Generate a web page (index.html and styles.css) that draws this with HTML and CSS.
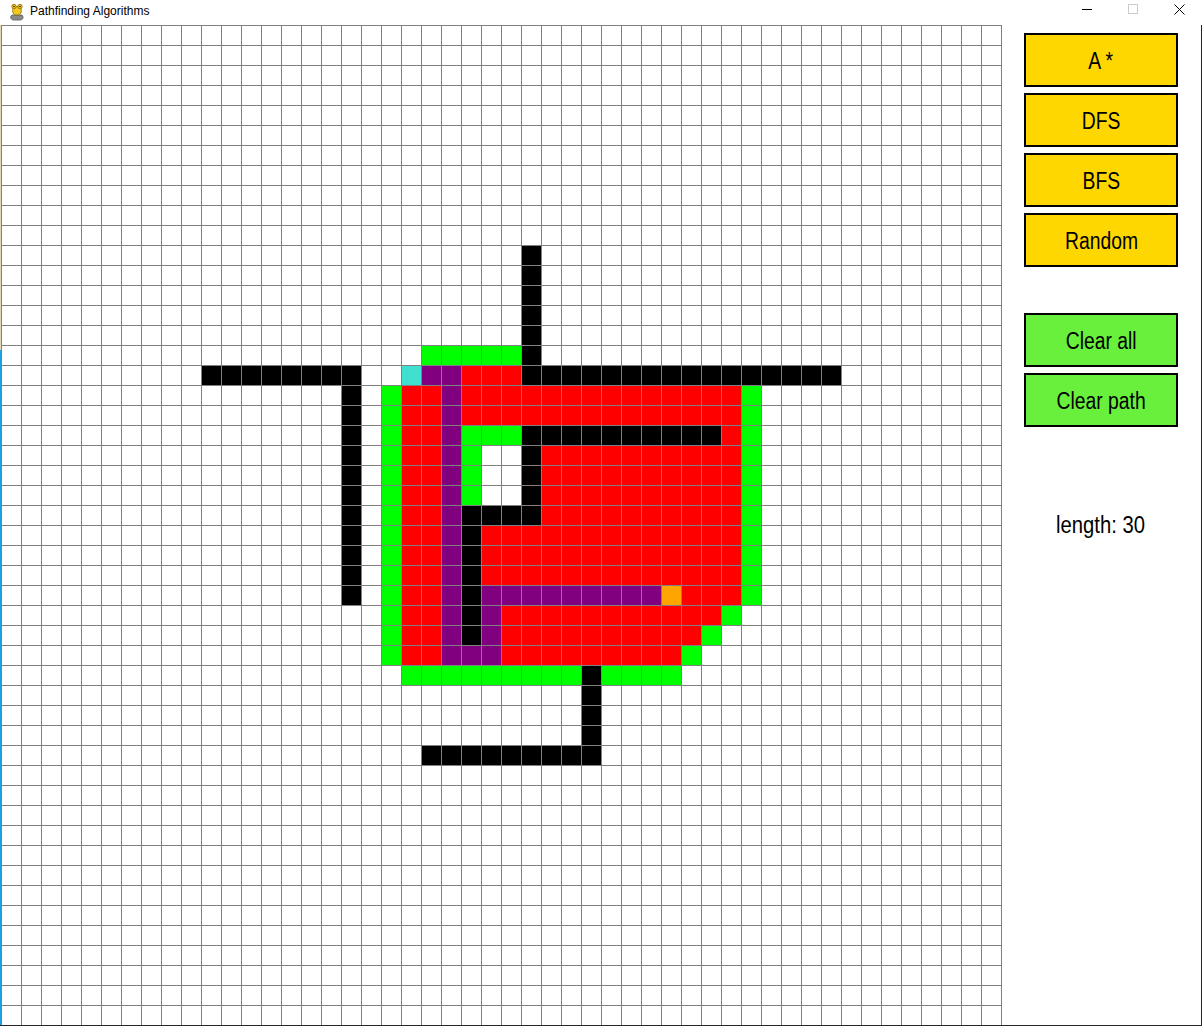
FILE: index.html
```html
<!DOCTYPE html>
<html>
<head>
<meta charset="utf-8">
<title>Pathfinding Algorithms</title>
<link rel="stylesheet" href="styles.css">
</head>
<body>
<div class="window">
  <div class="titlebar">
    <svg class="app-icon" width="16" height="18" viewBox="0 0 16 18">
      <path d="M3 12 C1 13 1 17 5 17 L11 17 C14 17 15 14 13 12 Z" fill="#8a8a8a" stroke="#555" stroke-width="0.8"/>
      <path d="M4 5 C3 9 4 12 8 12 C12 12 13 9 12 5 C11 3 5 3 4 5 Z" fill="#f2c81e" stroke="#8a6a00" stroke-width="0.8"/>
      <circle cx="5" cy="3.5" r="2.2" fill="#f2c81e" stroke="#8a6a00" stroke-width="0.8"/>
      <circle cx="11" cy="3.5" r="2.2" fill="#f2c81e" stroke="#8a6a00" stroke-width="0.8"/>
      <circle cx="5" cy="3.5" r="0.8" fill="#222"/>
      <circle cx="11" cy="3.5" r="0.8" fill="#222"/>
    </svg>
    <span class="title">Pathfinding Algorithms</span>
    <div class="controls">
      <div class="ctrl"><svg width="10" height="10" viewBox="0 0 10 10"><path d="M0 5.5 H10" stroke="#000" stroke-width="1"/></svg></div>
      <div class="ctrl"><svg width="10" height="10" viewBox="0 0 10 10"><rect x="0.5" y="0.5" width="9" height="9" fill="none" stroke="#cccccc" stroke-width="1"/></svg></div>
      <div class="ctrl"><svg width="11" height="11" viewBox="0 0 11 11"><path d="M0.5 0.5 L10.5 10.5 M10.5 0.5 L0.5 10.5" stroke="#000" stroke-width="1"/></svg></div>
    </div>
  </div>
  <div class="client">
    <div class="edge-left"></div>
    <div class="board">
      <div class="cell wall" style="grid-area: 12 / 27 / 18 / 28"></div>
      <div class="cell wall" style="grid-area: 18 / 11 / 19 / 19"></div>
      <div class="cell wall" style="grid-area: 19 / 18 / 30 / 19"></div>
      <div class="cell wall" style="grid-area: 18 / 27 / 19 / 43"></div>
      <div class="cell wall" style="grid-area: 21 / 27 / 22 / 37"></div>
      <div class="cell wall" style="grid-area: 22 / 27 / 25 / 28"></div>
      <div class="cell wall" style="grid-area: 25 / 24 / 26 / 28"></div>
      <div class="cell wall" style="grid-area: 26 / 24 / 32 / 25"></div>
      <div class="cell wall" style="grid-area: 33 / 30 / 37 / 31"></div>
      <div class="cell wall" style="grid-area: 37 / 22 / 38 / 31"></div>

      <div class="cell open" style="grid-area: 17 / 22 / 18 / 27"></div>
      <div class="cell open" style="grid-area: 19 / 20 / 33 / 21"></div>
      <div class="cell open" style="grid-area: 19 / 38 / 30 / 39"></div>
      <div class="cell open" style="grid-area: 21 / 24 / 22 / 27"></div>
      <div class="cell open" style="grid-area: 22 / 24 / 25 / 25"></div>
      <div class="cell open" style="grid-area: 30 / 37 / 31 / 38"></div>
      <div class="cell open" style="grid-area: 31 / 36 / 32 / 37"></div>
      <div class="cell open" style="grid-area: 32 / 35 / 33 / 36"></div>
      <div class="cell open" style="grid-area: 33 / 21 / 34 / 30"></div>
      <div class="cell open" style="grid-area: 33 / 31 / 34 / 35"></div>

      <div class="cell closed" style="grid-area: 18 / 24 / 19 / 27"></div>
      <div class="cell closed" style="grid-area: 19 / 21 / 33 / 23"></div>
      <div class="cell closed" style="grid-area: 19 / 24 / 21 / 38"></div>
      <div class="cell closed" style="grid-area: 21 / 37 / 22 / 38"></div>
      <div class="cell closed" style="grid-area: 22 / 28 / 29 / 38"></div>
      <div class="cell closed" style="grid-area: 26 / 25 / 29 / 28"></div>
      <div class="cell closed" style="grid-area: 29 / 35 / 30 / 38"></div>
      <div class="cell closed" style="grid-area: 30 / 26 / 31 / 37"></div>
      <div class="cell closed" style="grid-area: 31 / 26 / 32 / 36"></div>
      <div class="cell closed" style="grid-area: 32 / 26 / 33 / 35"></div>

      <div class="cell path" style="grid-area: 18 / 22 / 19 / 24"></div>
      <div class="cell path" style="grid-area: 19 / 23 / 33 / 24"></div>
      <div class="cell path" style="grid-area: 29 / 25 / 30 / 34"></div>
      <div class="cell path" style="grid-area: 30 / 25 / 33 / 26"></div>
      <div class="cell path" style="grid-area: 32 / 24 / 33 / 25"></div>

      <div class="cell end" style="grid-area: 18 / 21 / 19 / 22"></div>
      <div class="cell start" style="grid-area: 29 / 34 / 30 / 35"></div>
    </div>
    <div class="sidebar">
      <div class="btn-group">
        <div class="btn algo"><span class="label">A *</span></div>
        <div class="btn algo"><span class="label">DFS</span></div>
        <div class="btn algo"><span class="label">BFS</span></div>
        <div class="btn algo"><span class="label">Random</span></div>
      </div>
      <div class="btn-group actions">
        <div class="btn clear"><span class="label">Clear all</span></div>
        <div class="btn clear"><span class="label">Clear path</span></div>
      </div>
      <div class="length"><span class="label wide">length: 30</span></div>
    </div>
    <div class="edge-right"></div>
  </div>
  <div class="edge-bottom"></div>
</div>
</body>
</html>
```

FILE: styles.css
```css
* { box-sizing: border-box; }

html, body {
  margin: 0;
  padding: 0;
  background: #ffffff;
}

.window {
  width: 1202px;
  height: 1026px;
  display: flex;
  flex-direction: column;
  background: #ffffff;
  overflow: hidden;
}

.titlebar {
  height: 25px;
  display: flex;
  align-items: center;
  background: #ffffff;
  padding-left: 9px;
}

.app-icon {
  flex: none;
  margin-top: -2px;
}

.title {
  margin-left: 5px;
  font-family: "Liberation Sans", Arial, sans-serif;
  font-size: 12px;
  color: #000000;
  margin-top: -3px;
}

.controls {
  margin-left: auto;
  display: flex;
  height: 100%;
}

.ctrl {
  width: 46px;
  height: 20px;
  display: flex;
  align-items: center;
  justify-content: center;
  margin-top: -1px;
}

.ctrl svg { display: block; }

.client {
  height: 1000px;
  display: flex;
}

.edge-left {
  width: 1px;
  flex: none;
  background: linear-gradient(to bottom, #e4d9b2 0, #e4d9b2 325px, #1ba1e2 325px, #1ba1e2 100%);
}

.edge-right {
  width: 1px;
  flex: none;
  background: #262626;
}

.edge-bottom {
  height: 1px;
  background: #262626;
}

.board {
  position: relative;
  flex: none;
  box-sizing: content-box;
  width: 1000px;
  height: 1000px;
  border-right: 1px solid #808080;
  display: grid;
  grid-template-columns: repeat(50, 20px);
  grid-template-rows: repeat(50, 20px);
  background: #ffffff;
}

.board::after {
  content: "";
  position: absolute;
  left: 0;
  top: 0;
  width: 1000px;
  height: 1000px;
  pointer-events: none;
  background-image:
    linear-gradient(to right, #808080 1px, transparent 1px),
    linear-gradient(to bottom, #808080 1px, transparent 1px);
  background-size: 20px 20px;
}

.cell.wall { background: #000000; }
.cell.open { background: #00ff00; }
.cell.closed { background: #ff0000; }
.cell.path { background: #800080; }
.cell.end { background: #40e0d0; }
.cell.start { background: #ffa500; }

.sidebar {
  flex: 1;
  padding: 8px 0 0 22px;
  display: flex;
  flex-direction: column;
}

.btn-group {
  display: flex;
  flex-direction: column;
  gap: 6px;
}

.btn-group.actions {
  margin-top: 46px;
}

.btn {
  width: 154px;
  height: 54px;
  border: 2px solid #000000;
  display: flex;
  align-items: center;
  justify-content: center;
  font-family: "Liberation Sans", Arial, sans-serif;
  font-size: 23px;
  color: #000000;
  padding-top: 3px;
}

.label {
  display: inline-block;
  white-space: nowrap;
  transform: scaleX(0.84);
}

.label.wide {
  transform: scaleX(0.88);
}

.btn.algo { background: #ffd700; }
.btn.clear { background: #69f03c; }

.length {
  margin-top: 85px;
  width: 154px;
  display: flex;
  justify-content: center;
  font-family: "Liberation Sans", Arial, sans-serif;
  font-size: 23px;
  line-height: 26px;
  color: #000000;
}
```
